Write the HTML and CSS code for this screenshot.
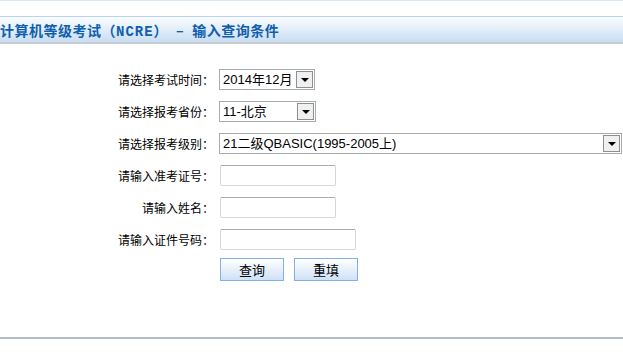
FILE: index.html
```html
<!DOCTYPE html>
<html lang="zh-CN">
<head>
    <meta charset="UTF-8">
    <title>计算机等级考试（NCRE） - 输入查询条件</title>
    <link rel="stylesheet" href="styles.css">
</head>
<body>
    <div class="topline"></div>

    <div class="titlebar">
        <h1>计算机等级考试（<span class="mono">NCRE</span>）<span class="dash">–</span>输入查询条件</h1>
    </div>

    <form class="query" onsubmit="return false;">
        <div class="row">
            <label>请选择考试时间：</label>
            <span class="sel w1">
                <select><option>2014年12月</option></select>
                <i class="arrow"></i>
            </span>
        </div>
        <div class="row">
            <label>请选择报考省份：</label>
            <span class="sel w2">
                <select><option>11-北京</option></select>
                <i class="arrow"></i>
            </span>
        </div>
        <div class="row">
            <label>请选择报考级别：</label>
            <span class="sel w3">
                <select><option>21二级QBASIC(1995-2005上)</option></select>
                <i class="arrow"></i>
            </span>
        </div>
        <div class="row">
            <label>请输入准考证号：</label>
            <input type="text" class="txt">
        </div>
        <div class="row">
            <label>请输入姓名：</label>
            <input type="text" class="txt">
        </div>
        <div class="row">
            <label>请输入证件号码：</label>
            <input type="text" class="txt long">
        </div>
        <div class="row btns">
            <label></label>
            <button type="submit">查询</button>
            <button type="reset">重填</button>
        </div>
    </form>

    <div class="bottomline"></div>
</body>
</html>
```

FILE: styles.css
```css
body {
    margin: 0;
    padding: 0;
    background: #fff;
    font-family: "Noto Sans CJK SC", sans-serif;
    font-size: 12px;
    color: #000;
}
.topline {
    height: 1px;
    background: #dce8f5;
    margin-bottom: 15px;
}
.titlebar {
    height: 25px;
    border-top: 1px solid #b8d4ee;
    border-bottom: 2px solid #c4ccd4;
    background: linear-gradient(to bottom, #fbfdff, #c9ddf1);
}
.titlebar h1 {
    margin: 0;
    font-size: 14px;
    line-height: 26px;
    font-weight: bold;
    color: #0f5fae;
    letter-spacing: 0.5px;
    white-space: nowrap;
}
.titlebar .mono {
    font-family: "Liberation Mono", monospace;
    letter-spacing: 1px;
}
.titlebar .dash {
    display: inline-block;
    margin: 0 8px;
}
.query {
    margin-top: 19px;
}
.row {
    display: flex;
    align-items: center;
    height: 32px;
}
.row label {
    width: 214px;
    padding-right: 5px;
    text-align: right;
    flex-shrink: 0;
}
.sel {
    position: relative;
    display: inline-block;
    height: 21px;
}
.sel select {
    appearance: none;
    -webkit-appearance: none;
    width: 100%;
    height: 21px;
    margin: 0;
    padding: 0 0 0 3px;
    border: 1px solid #a5acb2;
    border-radius: 0;
    background: #fff;
    font-family: "Liberation Sans", "Noto Sans CJK SC", sans-serif;
    font-size: 13px;
    color: #000;
}
.sel .arrow {
    position: absolute;
    right: 2px;
    top: 2px;
    width: 15px;
    height: 15px;
    border: 1px solid #8e8f8f;
    background: #f0f0f0;
    pointer-events: none;
}
.sel .arrow::after {
    content: "";
    position: absolute;
    left: 4px;
    top: 6px;
    border-left: 4px solid transparent;
    border-right: 4px solid transparent;
    border-top: 4px solid #000;
}
.w1 { width: 96px; }
.w2 { width: 97px; }
.w3 { width: 403px; }
.txt {
    box-sizing: border-box;
    width: 116px;
    height: 21px;
    margin: 0 0 0 1px;
    padding: 0 3px;
    border: 1px solid #d4d7dc;
    border-top-color: #a9abb0;
    border-radius: 2px;
    font-size: 12px;
}
.txt.long {
    width: 136px;
}
.btns {
    height: 29px;
}
.btns button {
    box-sizing: border-box;
    width: 64px;
    height: 23px;
    margin: 0 9px 0 1px;
    padding: 0;
    border: 1px solid #7fb0e6;
    background: linear-gradient(to bottom, #ffffff, #cfe1f6);
    font-family: "Noto Sans CJK SC", sans-serif;
    font-size: 13px;
    color: #000;
    cursor: pointer;
}
.bottomline {
    margin-top: 53px;
    height: 2px;
    background: #b5bdcd;
}
```
